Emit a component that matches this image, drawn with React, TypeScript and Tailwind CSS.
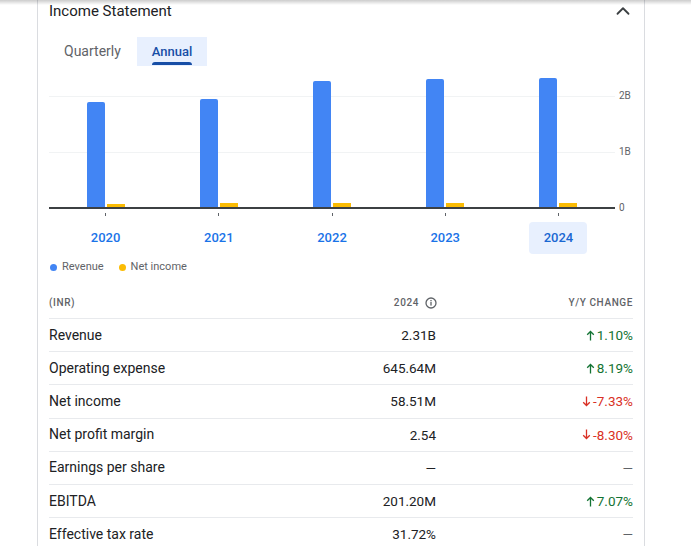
import { ChevronUp } from "lucide-react";

const years = [
  { year: "2020", revenue: 1.875, income: 0.05 },
  { year: "2021", revenue: 1.93, income: 0.07 },
  { year: "2022", revenue: 2.25, income: 0.07 },
  { year: "2023", revenue: 2.29, income: 0.08 },
  { year: "2024", revenue: 2.31, income: 0.07 },
];

const PX_PER_B = 56;

type Row = { label: string; value: string; change: string; dir: "up" | "down" | null };

const rows: Row[] = [
  { label: "Revenue", value: "2.31B", change: "1.10%", dir: "up" },
  { label: "Operating expense", value: "645.64M", change: "8.19%", dir: "up" },
  { label: "Net income", value: "58.51M", change: "-7.33%", dir: "down" },
  { label: "Net profit margin", value: "2.54", change: "-8.30%", dir: "down" },
  { label: "Earnings per share", value: "—", change: "—", dir: null },
  { label: "EBITDA", value: "201.20M", change: "7.07%", dir: "up" },
  { label: "Effective tax rate", value: "31.72%", change: "—", dir: null },
];

function Arrow({ dir }: { dir: "up" | "down" }) {
  return (
    <svg width="9" height="11" viewBox="0 0 9 11" className={dir === "down" ? "rotate-180" : ""}>
      <path d="M4.5 10.5V1.5M1.2 4.8l3.3-3.3 3.3 3.3" fill="none" stroke="currentColor" strokeWidth="1.3" />
    </svg>
  );
}

function InfoIcon() {
  return (
    <svg width="12" height="12" viewBox="0 0 12 12">
      <circle cx="6" cy="6" r="5" fill="none" stroke="#5f6368" strokeWidth="1.3" />
      <rect x="5.35" y="5" width="1.3" height="3.6" fill="#5f6368" />
      <rect x="5.35" y="3" width="1.3" height="1.3" fill="#5f6368" />
    </svg>
  );
}

export default function App() {
  return (
    <div className="relative min-h-screen bg-white font-['Roboto','Liberation_Sans',sans-serif] text-[#202124]">
      <div className="pointer-events-none absolute inset-x-0 top-0 h-[5px] bg-gradient-to-b from-black/20 to-transparent" />

      <div className="ml-[37px] w-[608px] border-x border-[#dadce0] px-[11px] pb-6">
        {/* Header */}
        <div className="flex h-[22px] items-center justify-between">
          <h2 className="text-[15px] leading-[22px] text-[#202124]">Income Statement</h2>
          <ChevronUp size={22} strokeWidth={2} className="mr-[-1px] text-[#3c4043]" />
        </div>

        {/* Tabs */}
        <div className="mt-[15px] flex h-[29px]">
          <div className="flex items-center pl-[15px] pr-[16px] text-[14px] text-[#5f6368]">Quarterly</div>
          <div className="relative flex items-center bg-[#e8f0fe] px-[15px] text-[13px] font-medium text-[#174ea6]">
            Annual
            <div className="absolute bottom-[1px] left-[15px] right-[15px] h-[3px] rounded-t-sm bg-[#174ea6]" />
          </div>
        </div>

        {/* Chart */}
        <div className="relative mt-[4px] h-[139px]">
          <div className="absolute left-0 top-[26px] h-px w-[566px] bg-[#f1f3f4]" />
          <span className="absolute left-[570px] top-[21px] text-[10px] leading-[10px] text-[#5f6368]">2B</span>
          <div className="absolute left-0 top-[82px] h-px w-[566px] bg-[#f1f3f4]" />
          <span className="absolute left-[570px] top-[77px] text-[10px] leading-[10px] text-[#5f6368]">1B</span>
          <div className="absolute left-0 top-[137px] h-[2px] w-[566px] bg-[#3c4043]" />
          <span className="absolute left-[570px] top-[133px] text-[10px] leading-[10px] text-[#5f6368]">0</span>
          <div className="absolute left-0 top-0 flex h-[137px] w-[566px] items-end">
            {years.map((y) => (
              <div key={y.year} className="flex flex-1 items-end justify-center gap-[2px]">
                <div
                  className="w-[18px] rounded-t-[2px] bg-[#4285f4]"
                  style={{ height: y.revenue * PX_PER_B }}
                />
                <div
                  className="w-[18px] bg-[#fbbc04]"
                  style={{ height: Math.max(3, y.income * PX_PER_B) }}
                />
              </div>
            ))}
          </div>
        </div>

        {/* Ticks */}
        <div className="flex w-[566px]">
          {years.map((y) => (
            <div key={y.year} className="flex flex-1 justify-center pt-[4px]">
              <div className="h-[3px] w-px bg-[#5f6368]" />
            </div>
          ))}
        </div>

        {/* Year labels */}
        <div className="mt-[6px] flex w-[566px]">
          {years.map((y) => (
            <div key={y.year} className="flex flex-1 justify-center">
              <div
                className={
                  y.year === "2024"
                    ? "flex h-[32px] w-[58px] items-center justify-center rounded bg-[#e8f0fe] text-[13px] font-medium text-[#1967d2]"
                    : "flex h-[32px] w-[58px] items-center justify-center text-[13px] font-medium text-[#1a73e8]"
                }
              >
                {y.year}
              </div>
            </div>
          ))}
        </div>

        {/* Legend */}
        <div className="mt-[6px] flex h-[14px] items-center text-[11px] text-[#5f6368]">
          <span className="ml-[1px] h-[7px] w-[7px] rounded-full bg-[#4285f4]" />
          <span className="ml-[5px]">Revenue</span>
          <span className="ml-[15px] h-[7px] w-[7px] rounded-full bg-[#fbbc04]" />
          <span className="ml-[5px]">Net income</span>
        </div>

        {/* Table */}
        <div className="mt-[13px]">
          <div className="flex h-[32px] items-center border-b border-[#e8eaed] text-[10px] font-medium tracking-[0.6px] text-[#5f6368]">
            <div className="flex-1">(INR)</div>
            <div className="flex w-[160px] items-center justify-end gap-[6px]">
              <span>2024</span>
              <InfoIcon />
            </div>
            <div className="w-[196px] text-right">Y/Y CHANGE</div>
          </div>
          {rows.map((r) => (
            <div
              key={r.label}
              className="flex h-[33.2px] items-center border-b border-[#e8eaed]"
            >
              <div className="flex-1 text-[14px] text-[#202124]">{r.label}</div>
              <div className="w-[160px] pr-[1px] text-right text-[13.5px] text-[#202124]">{r.value}</div>
              <div
                className={
                  r.dir === "up"
                    ? "flex w-[196px] items-center justify-end gap-[2px] text-[13.5px] text-[#137333]"
                    : r.dir === "down"
                      ? "flex w-[196px] items-center justify-end gap-[2px] text-[13.5px] text-[#d93025]"
                      : "flex w-[196px] items-center justify-end text-[13.5px] text-[#5f6368]"
                }
              >
                {r.dir && <Arrow dir={r.dir} />}
                <span>{r.change}</span>
              </div>
            </div>
          ))}
        </div>
      </div>
    </div>
  );
}
